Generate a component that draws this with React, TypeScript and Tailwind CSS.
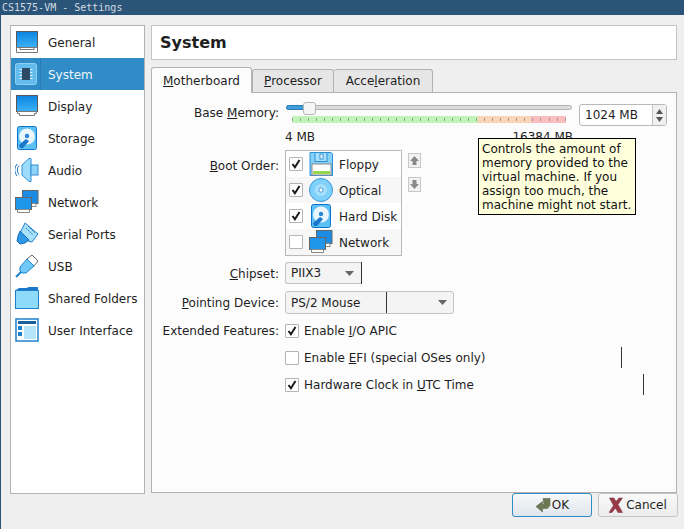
import React from 'react';

const Monitor = ({ tray = false }: { tray?: boolean }) => (
  <svg width="24" height="24" viewBox="0 0 24 24">
    <defs>
      <linearGradient id="scr" x1="0" y1="0" x2="0" y2="1">
        <stop offset="0" stopColor="#0a84e0" />
        <stop offset="1" stopColor="#3db0f7" />
      </linearGradient>
    </defs>
    <rect x="1.5" y="1.5" width="21" height="16" fill="url(#scr)" stroke="#5a5a5a" strokeWidth="1" />
    {tray ? (
      <path d="M1.5 17.5h21v5h-21z M5 17.5v2h14v-2" fill="#fff" stroke="#777" strokeWidth="1" />
    ) : (
      <path d="M2.5 17.5h19v2h-2v2h-15v-2h-2z" fill="#fff" stroke="#777" strokeWidth="1" />
    )}
  </svg>
);

const Chip = () => (
  <svg width="24" height="24" viewBox="0 0 24 24">
    <rect x="1.5" y="1.5" width="21" height="21" rx="2" fill="#63bcec" stroke="#8fd0f2" />
    <rect x="8" y="6" width="8" height="12" fill="#2c4a63" />
    <path d="M5.5 7.5H8M5.5 10.5H8M5.5 13.5H8M5.5 16.5H8M16 7.5h2.5M16 10.5h2.5M16 13.5h2.5M16 16.5h2.5" stroke="#d8eefa" />
  </svg>
);

const Disk = () => (
  <svg width="24" height="24" viewBox="0 0 24 24">
    <rect x="2.5" y="0.5" width="19" height="23" rx="2" fill="#5cc0f5" stroke="#0d74c8" />
    <circle cx="12" cy="10.5" r="8" fill="#eaf6fd" />
    <circle cx="12" cy="10" r="2.2" fill="#2c85d0" />
    <path d="M4 19l7-6 3 2-6 7H5z" fill="#1a78cc" />
  </svg>
);

const Speaker = () => (
  <svg width="24" height="24" viewBox="0 0 24 24">
    <path d="M7 7l7-6.5h2v23h-2l-7-6.5z" fill="#9edcfb" stroke="#2f8fd6" />
    <rect x="16" y="7" width="7" height="10" fill="#8fd4f8" stroke="#2f8fd6" />
    <path d="M4 7.5a7 7 0 0 0 0 9M2 6a10 10 0 0 0 0 12" fill="none" stroke="#1a78cc" />
  </svg>
);

const Net = () => (
  <svg width="24" height="24" viewBox="0 0 24 24">
    <rect x="7.5" y="0.5" width="15.5" height="13" fill="#1b8be3" stroke="#666" />
    <path d="M12 13.5h9v3h-9z" fill="#fff" stroke="#888" />
    <rect x="0.5" y="7.5" width="16" height="12" fill="#1f96ea" stroke="#666" />
    <path d="M2.5 19.5h12v3h-12z" fill="#fff" stroke="#888" />
  </svg>
);

const Serial = () => (
  <svg width="24" height="24" viewBox="0 0 24 24">
    <path d="M10 1l13 11-6 8-4-1-8-8z" fill="#a8e0fb" stroke="#1f80cc" />
    <path d="M13 4l7 7M11 6l7 7" stroke="#1f80cc" strokeDasharray="2 1" />
    <path d="M5 9l9 9-4 3-5 1-3-3 1-5z" fill="#2f97e4" stroke="#1670bd" />
  </svg>
);

const Usb = () => (
  <svg width="24" height="24" viewBox="0 0 24 24">
    <path d="M17 1l6 6-4 5-7-7z" fill="#fff" stroke="#666" />
    <path d="M12 5l7 7-8 7H7l-2-2v-4z" fill="#72c8f6" stroke="#1f80cc" />
    <path d="M6 18l-5 5" stroke="#1f80cc" strokeWidth="2" />
  </svg>
);

const Folder = () => (
  <svg width="24" height="24" viewBox="0 0 24 24">
    <path d="M1 4l3-2h7l3-1h9v3z" fill="#1a78cc" />
    <rect x="0.5" y="4.5" width="23" height="18" fill="#8edafb" stroke="#1f80cc" />
  </svg>
);

const UiIcon = () => (
  <svg width="24" height="24" viewBox="0 0 24 24">
    <rect x="1" y="1" width="22" height="22" fill="#fff" stroke="#1f80cc" strokeWidth="1.5" />
    <rect x="3" y="3" width="18" height="3" fill="#1a5f9e" />
    <rect x="3" y="8" width="4" height="4" fill="#1f80cc" />
    <rect x="3" y="14" width="4" height="4" fill="#1f80cc" />
    <rect x="9" y="8" width="12" height="13" fill="#b5e5fb" />
  </svg>
);

const Floppy = () => (
  <svg width="24" height="24" viewBox="0 0 24 24">
    <path d="M1 0.5h21l1.5 1.5v21.5H1z" fill="#86d2f8" stroke="#2f8fd6" />
    <rect x="6" y="0.5" width="12" height="9" fill="#a8e0fb" stroke="#2f8fd6" />
    <rect x="11" y="2" width="3" height="5" fill="#fff" stroke="#2f8fd6" />
    <rect x="3" y="12" width="19" height="11" fill="#fff" stroke="#888" />
    <rect x="4" y="19" width="17" height="3" fill="#97d64a" />
  </svg>
);

const Optical = () => (
  <svg width="24" height="24" viewBox="0 0 24 24">
    <circle cx="12" cy="12" r="11.5" fill="#7fd0fa" stroke="#3b97dc" />
    <circle cx="12" cy="12" r="6" fill="#a8e0fb" />
    <circle cx="12" cy="12" r="2.2" fill="#fff" stroke="#3b97dc" />
  </svg>
);

const Check = ({ on }: { on: boolean }) => (
  <span className="flex h-[14px] w-[14px] shrink-0 items-center justify-center rounded-[1px] border border-[#b4b4b4] bg-white">
    {on && (
      <svg width="10" height="10" viewBox="0 0 10 10">
        <path d="M1.5 5l2.4 3.2L8.5 1" fill="none" stroke="#1a1a1a" strokeWidth="2" />
      </svg>
    )}
  </span>
);

const Caret = () => (
  <svg width="9" height="5" viewBox="0 0 9 5" className="shrink-0">
    <path d="M0 0h9L4.5 5z" fill="#666" />
  </svg>
);

const menu = [
  { label: 'General', icon: <Monitor tray /> },
  { label: 'System', icon: <Chip />, active: true },
  { label: 'Display', icon: <Monitor /> },
  { label: 'Storage', icon: <Disk /> },
  { label: 'Audio', icon: <Speaker /> },
  { label: 'Network', icon: <Net /> },
  { label: 'Serial Ports', icon: <Serial /> },
  { label: 'USB', icon: <Usb /> },
  { label: 'Shared Folders', icon: <Folder /> },
  { label: 'User Interface', icon: <UiIcon /> },
];

const boot = [
  { label: 'Floppy', icon: <Floppy />, on: true },
  { label: 'Optical', icon: <Optical />, on: true },
  { label: 'Hard Disk', icon: <Disk />, on: true },
  { label: 'Network', icon: <Net />, on: false },
];

const ticks = Array.from({ length: 35 }, (_, i) => i);

export default function App() {
  return (
    <div className="flex h-[529px] w-[684px] flex-col overflow-hidden border-l border-l-[#2a5478] bg-[#efefef] font-['DejaVu_Sans',sans-serif] text-[12px] leading-none text-[#1e1e1e]">
      <div className="-ml-px flex h-[15px] shrink-0 items-center bg-[#2a5478] pl-[2px] font-['DejaVu_Sans_Mono',monospace] text-[10px] text-[#d4dbe2]">
        CS1575-VM - Settings
      </div>

      <div className="flex min-h-0 flex-1 gap-[6px] pl-[9px] pr-[7px] pt-[10px]">
        {/* sidebar */}
        <div className="h-[469px] w-[135px] shrink-0 border border-[#b2b2b2] bg-white">
          {menu.map((m) => (
            <div
              key={m.label}
              className={`flex h-[32px] items-center ${m.active ? 'bg-[#308cc6] text-[#eef6fb]' : ''}`}
            >
              <span className={`flex h-full w-[30px] shrink-0 items-center justify-center pl-[1px] ${m.active ? 'border-r border-r-[#2a7db2]' : ''}`}>
                {m.icon}
              </span>
              <span className="ml-[7px] pt-[2px]">{m.label}</span>
            </div>
          ))}
        </div>

        {/* right column */}
        <div className="flex h-[468px] w-[527px] flex-col">
          <div className="flex h-[35px] shrink-0 items-center border border-[#c4c4c4] bg-white pl-[8px] text-[16px] font-bold">
            System
          </div>

          <div className="mt-[7px] flex h-[25px] shrink-0 items-end">
            <div className="z-10 -mb-px flex h-[26px] w-[101px] items-center justify-center rounded-t-[3px] border border-b-0 border-[#b2b2b2] bg-[#fcfcfc]">
              <span><span className="underline">M</span>otherboard</span>
            </div>
            <div className="flex h-[23px] w-[82px] items-center justify-center rounded-t-[3px] border border-b-0 border-[#b2b2b2] bg-[#e6e6e6]">
              <span><span className="underline">P</span>rocessor</span>
            </div>
            <div className="flex h-[23px] w-[99px] items-center justify-center rounded-t-[3px] border border-b-0 border-l-0 border-[#b2b2b2] bg-[#e6e6e6]">
              <span>Acce<span className="underline">l</span>eration</span>
            </div>
          </div>

          <div className="min-h-0 flex-1 border border-[#b2b2b2] bg-[#fcfcfc] pt-[9px]">
            {/* memory */}
            <div className="flex">
              <div className="w-[127px] shrink-0 pt-[5px] text-right">
                Base <span className="underline">M</span>emory:
              </div>
              <div className="relative ml-[6px] w-[382px]">
                <div className="flex items-start gap-[7px]">
                  <div className="w-[287px]">
                    <div className="relative h-[13px]">
                      <div className="absolute left-[1px] right-0 top-[3px] h-[5px] rounded-full border border-[#b2b2b2] bg-[#dcdcdc]" />
                      <div className="absolute left-[1px] top-[3px] h-[5px] w-[20px] rounded-l-full border border-[#2a7db2] bg-[#3f9ddb]" />
                      <div className="absolute left-[18px] top-0 h-[13px] w-[13px] rounded-[3px] border border-[#b8b8b8] bg-[#f6f6f6]" />
                    </div>
                    <div className="relative ml-[7px] mt-[1px] flex h-[7px] w-[274px]">
                      <div className="w-[186px] bg-[#bff5b8]" />
                      <div className="w-[53px] bg-[#fbd3b7]" />
                      <div className="w-[35px] bg-[#fbbdbd]" />
                      <div className="absolute inset-x-0 top-[2px] flex h-[3px] justify-between">
                        {ticks.map((t) => (
                          <span key={t} className="h-full w-px bg-[#9a9a9a]" />
                        ))}
                      </div>
                    </div>
                  </div>
                  <div className="mt-[2px] flex h-[22px] w-[88px] shrink-0 items-stretch rounded-[3px] border border-[#b8b8b8] bg-white">
                    <span className="flex flex-1 items-center pl-[5px]">1024 MB</span>
                    <span className="flex w-[14px] flex-col items-center justify-center gap-[3px] border-l border-l-[#c4c4c4] bg-[#f0f0f0]">
                      <svg width="7" height="5" viewBox="0 0 7 5"><path d="M0 5h7L3.5 0z" fill="#555" /></svg>
                      <svg width="7" height="5" viewBox="0 0 7 5"><path d="M0 0h7L3.5 5z" fill="#555" /></svg>
                    </span>
                  </div>
                </div>
                <div className="mt-[5px] flex w-[288px] justify-between">
                  <span>4 MB</span>
                  <span>16384 MB</span>
                </div>

                {/* tooltip */}
                <div className="absolute left-[193px] top-[36px] z-20 h-[77px] w-[158px] border border-black bg-[#ffffdc] pl-[3px] pt-[3px] leading-[14px] text-[#111]">
                  Controls the amount of
                  <br />memory provided to the
                  <br />virtual machine. If you
                  <br />assign too much, the
                  <br />machine might not start.
                </div>
              </div>
            </div>

            {/* boot order */}
            <div className="mt-[7px] flex">
              <div className="w-[127px] shrink-0 pt-[10px] text-right">
                <span className="underline">B</span>oot Order:
              </div>
              <div className="ml-[6px] w-[117px] border border-[#b8b8b8] bg-white">
                {boot.map((b, i) => (
                  <div key={b.label} className={`flex h-[26px] items-center ${i % 2 ? 'bg-[#f7f7f7]' : ''}`}>
                    <span className="ml-[3px]"><Check on={b.on} /></span>
                    <span className="ml-[6px] shrink-0"><span className="block h-[24px] w-[24px]">{b.icon}</span></span>
                    <span className="ml-[6px] pt-[2px]">{b.label}</span>
                  </div>
                ))}
              </div>
              <div className="ml-[6px] flex flex-col gap-[9px] pt-[3px]">
                <span className="flex h-[15px] w-[13px] items-center justify-center border border-[#c8c8c8] bg-[#f2f2f2]">
                  <svg width="9" height="9" viewBox="0 0 9 9"><path d="M4.5 0L9 5H6.5v4h-4V5H0z" fill="#8a8a8a" /></svg>
                </span>
                <span className="flex h-[15px] w-[13px] items-center justify-center border border-[#c8c8c8] bg-[#f2f2f2]">
                  <svg width="9" height="9" viewBox="0 0 9 9"><path d="M4.5 9L9 4H6.5V0h-4v4H0z" fill="#8a8a8a" /></svg>
                </span>
              </div>
            </div>

            {/* chipset */}
            <div className="mt-[6px] flex items-center">
              <div className="w-[127px] shrink-0 pt-[2px] text-right">
                <span className="underline">C</span>hipset:
              </div>
              <div className="ml-[6px] flex h-[22px] w-[76px] items-center justify-between rounded-l-[3px] border border-r-0 border-[#c4c4c4] bg-[#f4f4f4] pl-[5px] pr-[7px]">
                <span>PIIX3</span>
                <Caret />
              </div>
              <span className="h-[22px] w-px bg-[#333]" />
            </div>

            {/* pointing device */}
            <div className="mt-[7px] flex items-center">
              <div className="w-[127px] shrink-0 text-right">
                <span className="underline">P</span>ointing Device:
              </div>
              <div className="ml-[6px] flex h-[23px] w-[169px] items-center rounded-[3px] border border-[#c4c4c4] bg-[#f4f4f4]">
                <span className="w-[100px] pl-[5px]">PS/2 Mouse</span>
                <span className="h-full w-px bg-[#333]" />
                <span className="flex-1" />
                <span className="mr-[6px]"><Caret /></span>
              </div>
            </div>

            {/* extended features */}
            <div className="mt-[3px] flex h-[27px] items-center">
              <div className="w-[127px] shrink-0 text-right">Extended Features:</div>
              <div className="ml-[6px] flex items-center gap-[5px]">
                <Check on />
                <span>Enable <span className="underline">I</span>/O APIC</span>
              </div>
            </div>
            <div className="flex h-[27px] items-center">
              <div className="ml-[133px] flex w-[337px] items-center gap-[5px]">
                <Check on={false} />
                <span>Enable <span className="underline">E</span>FI (special OSes only)</span>
                <span className="ml-auto h-[21px] w-px bg-[#333]" />
              </div>
            </div>
            <div className="flex h-[27px] items-center">
              <div className="ml-[133px] flex w-[359px] items-center gap-[5px]">
                <Check on />
                <span>Hardware Clock in <span className="underline">U</span>TC Time</span>
                <span className="ml-auto h-[21px] w-px bg-[#333]" />
              </div>
            </div>
          </div>
        </div>
      </div>

      {/* buttons */}
      <div className="flex h-[36px] shrink-0 items-start justify-end gap-[6px] pr-[6px]">
        <div className="flex h-[24px] w-[80px] items-center justify-center gap-[1px] rounded-[3px] border border-[#308cc6] bg-gradient-to-b from-[#f6f8fa] to-[#dfe6ec]">
          <svg width="16" height="16" viewBox="0 0 16 16">
            <path d="M8 1.5h7v7l-2.5 3H7.5V15L1 9.5 7.5 4.5v3h1.5z" fill="#6b7a55" stroke="#4c5a3c" strokeWidth="0.5" />
          </svg>
          <span>OK</span>
        </div>
        <div className="flex h-[24px] w-[80px] items-center justify-center gap-[3px] rounded-[3px] border border-[#c4c4c4] bg-gradient-to-b from-[#fafafa] to-[#ececec]">
          <svg width="14" height="16" viewBox="0 0 14 16">
            <path d="M0.5 1h4.5l2 3.5L10 1h3.5L9 7.5l4.5 8H9L6.5 11 3 15.5H0l4.5-7z" fill="#9a3a48" stroke="#6e2833" strokeWidth="0.5" />
          </svg>
          <span>Cancel</span>
        </div>
      </div>
    </div>
  );
}
